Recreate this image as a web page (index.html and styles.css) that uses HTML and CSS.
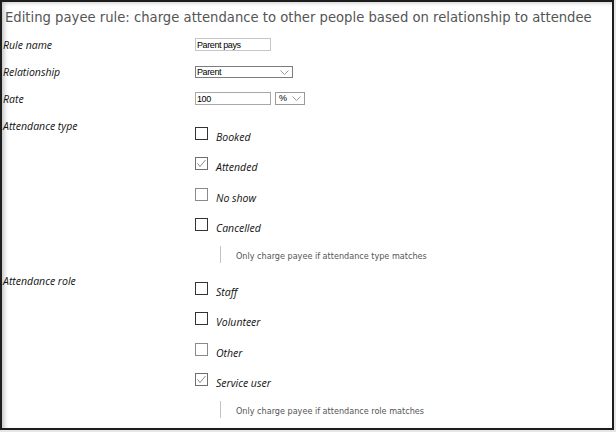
FILE: index.html
```html
<!DOCTYPE html>
<html>
<head>
<meta charset="utf-8">
<link rel="stylesheet" href="styles.css">
</head>
<body>
<div class="frame">
  <h1 class="title">Editing payee rule: charge attendance to other people based on relationship to attendee</h1>
  <div class="row">
    <label class="lbl">Rule name</label>
    <div class="ctl"><input class="txt" type="text" value="Parent pays"></div>
  </div>
  <div class="row">
    <label class="lbl">Relationship</label>
    <div class="ctl">
      <span class="sel sel-wide">Parent<svg class="chev" width="9" height="5" viewBox="0 0 9 5"><path d="M0.5 0.5 L4.5 4.5 L8.5 0.5" fill="none" stroke="#999" stroke-width="1"/></svg></span>
    </div>
  </div>
  <div class="row">
    <label class="lbl">Rate</label>
    <div class="ctl">
      <input class="txt txt-rate" type="text" value="100">
      <span class="sel sel-small">%<svg class="chev" width="9" height="5" viewBox="0 0 9 5"><path d="M0.5 0.5 L4.5 4.5 L8.5 0.5" fill="none" stroke="#999" stroke-width="1"/></svg></span>
    </div>
  </div>
  <div class="section">
    <div class="lbl sec-lbl">Attendance type</div>
    <div class="opts">
      <div class="opt"><span class="cb"></span><span class="opt-text">Booked</span></div>
      <div class="opt"><span class="cb cb-checked"><svg width="11" height="11" viewBox="0 0 11 11"><path d="M1.5 5.5 L4 8.5 L9.5 2" fill="none" stroke="#888" stroke-width="1"/></svg></span><span class="opt-text">Attended</span></div>
      <div class="opt"><span class="cb cb-light"></span><span class="opt-text">No show</span></div>
      <div class="opt"><span class="cb"></span><span class="opt-text">Cancelled</span></div>
      <div class="note">Only charge payee if attendance type matches</div>
    </div>
  </div>
  <div class="section">
    <div class="lbl sec-lbl">Attendance role</div>
    <div class="opts">
      <div class="opt"><span class="cb"></span><span class="opt-text">Staff</span></div>
      <div class="opt"><span class="cb"></span><span class="opt-text">Volunteer</span></div>
      <div class="opt"><span class="cb cb-light"></span><span class="opt-text">Other</span></div>
      <div class="opt"><span class="cb cb-checked"><svg width="11" height="11" viewBox="0 0 11 11"><path d="M1.5 5.5 L4 8.5 L9.5 2" fill="none" stroke="#888" stroke-width="1"/></svg></span><span class="opt-text">Service user</span></div>
      <div class="note">Only charge payee if attendance role matches</div>
    </div>
  </div>
</div>
</body>
</html>
```
FILE: styles.css
```css
html, body {
  margin: 0;
  padding: 0;
  background: #e6e6e6;
}
.frame {
  box-sizing: border-box;
  width: 614px;
  height: 430px;
  border: 2px solid #1c1c1c;
  background: #fff;
  box-shadow: inset 5px 0 5px -3px #bdbdbd, inset 0 4px 4px -3px #cfcfcf;
  overflow: hidden;
}
.title {
  margin: 0;
  padding: 2px 0 0 3px;
  height: 27px;
  line-height: 28px;
  font-family: "DejaVu Sans", Verdana, sans-serif;
  font-weight: normal;
  font-size: 13.2px;
  color: #555;
  white-space: nowrap;
}
.row {
  display: grid;
  grid-template-columns: 193px auto;
  align-items: center;
  height: 27px;
}
.lbl {
  padding-left: 1px;
  font-family: "Open Sans", sans-serif;
  font-style: italic;
  font-size: 10.5px;
  color: #111;
}
.ctl {
  display: flex;
  align-items: center;
  gap: 4px;
}
.txt {
  box-sizing: border-box;
  width: 76px;
  height: 13px;
  margin: 0;
  padding: 0 1px;
  border: 1px solid #c6c6c6;
  font-family: "Liberation Sans", Arial, sans-serif;
  font-size: 9px;
  letter-spacing: -0.4px;
  color: #000;
  outline: none;
}
.txt-rate {
  border-color: #a8a8a8;
}
.sel {
  position: relative;
  box-sizing: border-box;
  display: block;
  height: 12px;
  line-height: 10px;
  padding: 0 1px;
  border: 1px solid #7d7d7d;
  font-family: "Liberation Sans", Arial, sans-serif;
  font-size: 9px;
  letter-spacing: -0.4px;
  color: #000;
}
.sel-wide {
  width: 98px;
}
.sel-small {
  width: 30px;
  height: 13px;
  line-height: 11px;
  padding-left: 3px;
  border-color: #9a9a9a;
}
.chev {
  position: absolute;
  right: 3px;
  top: 3px;
}
.section {
  display: grid;
  grid-template-columns: 193px auto;
  align-items: start;
  margin-top: 2px;
}
.section + .section {
  margin-top: 6px;
}
.sec-lbl {
  padding-top: 5px;
  line-height: 14px;
}
.opts {
  padding-top: 13px;
  display: flex;
  flex-direction: column;
  gap: 17.3px;
}
.opt {
  display: flex;
  align-items: flex-end;
  height: 13px;
}
.cb {
  box-sizing: border-box;
  width: 13px;
  height: 13px;
  border: 1px solid #333;
  flex: none;
  display: flex;
  align-items: center;
  justify-content: center;
}
.cb-light {
  border-color: #8a8a8a;
}
.cb-checked {
  border-color: #6f6f6f;
}
.opt-text {
  margin-left: 8px;
  font-family: "Open Sans", sans-serif;
  font-style: italic;
  font-size: 10.5px;
  line-height: 10px;
  position: relative;
  top: 2px;
  color: #111;
}
.note {
  margin: -2px 0 0 25px;
  height: 17px;
  border-left: 1px solid #c4c4c4;
  padding-left: 15px;
  font-family: "DejaVu Sans", Verdana, sans-serif;
  font-size: 8.1px;
  line-height: 21px;
  color: #555;
}
```
